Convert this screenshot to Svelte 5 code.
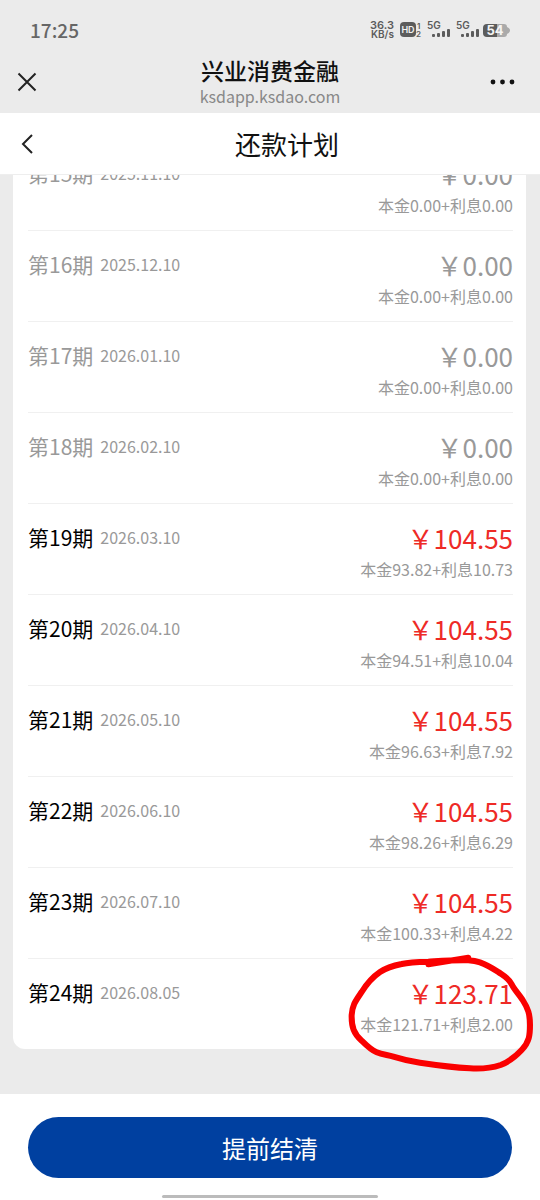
<script>
	const periods = [
		{ no: 15, date: '2025.11.10', total: '0.00', principal: '0.00', interest: '0.00' },
		{ no: 16, date: '2025.12.10', total: '0.00', principal: '0.00', interest: '0.00' },
		{ no: 17, date: '2026.01.10', total: '0.00', principal: '0.00', interest: '0.00' },
		{ no: 18, date: '2026.02.10', total: '0.00', principal: '0.00', interest: '0.00' },
		{ no: 19, date: '2026.03.10', total: '104.55', principal: '93.82', interest: '10.73' },
		{ no: 20, date: '2026.04.10', total: '104.55', principal: '94.51', interest: '10.04' },
		{ no: 21, date: '2026.05.10', total: '104.55', principal: '96.63', interest: '7.92' },
		{ no: 22, date: '2026.06.10', total: '104.55', principal: '98.26', interest: '6.29' },
		{ no: 23, date: '2026.07.10', total: '104.55', principal: '100.33', interest: '4.22' },
		{ no: 24, date: '2026.08.05', total: '123.71', principal: '121.71', interest: '2.00', marked: true }
	];

	// x offsets of the two SIM indicators
	const sims = [57, 86];
</script>

<div class="screen">
	<div class="status-bar">
		<span class="time">17:25</span>
		<svg class="status-icons" width="140" height="20" viewBox="0 0 140 20">
			<text x="0" y="9" font-size="11">36.3</text>
			<text x="1" y="18" font-size="10">KB/s</text>
			<rect x="30" y="2" width="16" height="15" rx="4" />
			<text class="light" x="38" y="13" font-size="9" text-anchor="middle">HD</text>
			<text x="47" y="9" font-size="8">1</text>
			<text x="46" y="17" font-size="8">2</text>
			{#each sims as x}
				<g transform="translate({x} 0)">
					<text x="0" y="9" font-size="10">5G</text>
					<rect x="5" y="14" width="3" height="3" rx="1" />
					<rect x="10" y="13" width="3" height="4" rx="1" />
					<rect x="15" y="11" width="3" height="6" rx="1" />
					<rect x="20" y="9" width="3" height="8" rx="1" />
				</g>
			{/each}
			<path class="pale" d="M117 4h17a3 3 0 0 1 3 3c2 1 3 2 3 3.500s-1 2.500-3 3.500a3 3 0 0 1-3 3h-17z" />
			<path d="M117 4h10v13h-10a4 4 0 0 1-4-4V8a4 4 0 0 1 4-4z" />
			<text class="light level" x="125" y="15" font-size="13" text-anchor="middle">54</text>
		</svg>
	</div>

	<div class="browser-bar">
		<button class="icon-btn close" aria-label="关闭">
			<svg width="20" height="20" viewBox="0 0 20 20">
				<path d="M1.500 1.500l17 17M18.500 1.500l-17 17" />
			</svg>
		</button>
		<div class="site">
			<strong>兴业消费金融</strong>
			<span>ksdapp.ksdao.com</span>
		</div>
		<button class="icon-btn" aria-label="更多">
			<svg class="dots" width="26" height="20" viewBox="0 0 26 20">
				<circle cx="3" cy="10" r="2.400" />
				<circle cx="12.500" cy="10" r="2.400" />
				<circle cx="22" cy="10" r="2.400" />
			</svg>
		</button>
	</div>

	<header>
		<button class="back" aria-label="返回">
			<svg width="14" height="20" viewBox="0 0 14 20">
				<path d="M12 1L3 10l9 9" />
			</svg>
		</button>
		<h1>还款计划</h1>
	</header>

	<main>
		<ul class="card">
			{#each periods as p}
				<li class:due={p.total !== '0.00'}>
					<div class="period">
						<span class="no">第{p.no}期</span>
						<span class="date">{p.date}</span>
					</div>
					<div class="amount">
						<span class="total">￥{p.total}</span>
						<span class="detail">本金{p.principal}+利息{p.interest}</span>
					</div>
					{#if p.marked}
						<svg class="mark" width="190" height="124" viewBox="48 36 570 372">
							<path d="M295 73L415 53M415 61C365 60 330 63 295 65C255 66 232 68 215 72C185 78 165 86 150 96C125 113 108 135 95 156C76 184 67 195 65 225C64 262 72 282 95 302C110 317 123 330 140 337C157 344 174 345 190 350C215 358 242 364 270 368C310 374 370 382 420 385C450 387 485 384 512 375C538 365 560 346 575 330C598 306 600 285 600 255C600 222 594 205 578 180C563 158 552 148 545 133C537 115 524 109 505 96C485 83 470 74 450 67C437 63 430 62 415 61" />
						</svg>
					{/if}
				</li>
			{/each}
		</ul>
	</main>

	<footer>
		<button class="settle">提前结清</button>
		<div class="home-indicator"></div>
	</footer>
</div>

<style>
	:global(body) {
		margin: 0;
		background: #ebebeb;
	}

	.screen {
		height: 100vh;
		display: flex;
		flex-direction: column;
		font-family: 'Noto Sans CJK SC', sans-serif;
		color: #111;
	}

	button {
		border: 0;
		padding: 0;
		background: none;
		font-family: inherit;
		cursor: pointer;
	}

	svg {
		display: block;
	}

	.status-bar {
		display: flex;
		justify-content: space-between;
		align-items: center;
		padding: 18px 30px 8px;
		flex-shrink: 0;
	}

	.time {
		font-size: 19px;
		line-height: 24px;
		font-weight: 500;
		color: #666;
	}

	.status-icons {
		overflow: visible;
		fill: #5c5c5c;
		font-weight: 600;
		font-family: Inter, sans-serif;
	}

	.status-icons .light {
		fill: #f4f4f4;
	}

	.status-icons .level {
		font-weight: 700;
	}

	.status-icons .pale {
		fill: #aaa;
	}

	.browser-bar {
		display: flex;
		justify-content: space-between;
		align-items: center;
		flex-shrink: 0;
		padding: 6px 24px 5px 17px;
	}

	.icon-btn {
		display: flex;
		width: 26px;
	}

	/* wider than its icon, so that the site name stays centred */
	.close {
		width: 33px;
	}

	.icon-btn svg,
	.back svg {
		fill: none;
		stroke: #222;
		stroke-width: 2;
	}

	.icon-btn .dots {
		fill: #111;
		stroke: none;
	}

	.site {
		display: flex;
		flex-direction: column;
		align-items: center;
	}

	.site strong {
		font-size: 23px;
		line-height: 28px;
		font-weight: 500;
	}

	.site span {
		font-size: 16px;
		line-height: 24px;
		color: #888;
	}

	header {
		display: flex;
		align-items: center;
		height: 61px;
		flex-shrink: 0;
		background: #fff;
		border-bottom: 1px solid #eee;
	}

	.back {
		display: flex;
		justify-content: flex-end;
		width: 34px;
	}

	h1 {
		flex: 1;
		margin: 0;
		text-align: center;
		font-size: 26px;
		line-height: 36px;
		font-weight: 400;
	}

	/* reversed column keeps the list scrolled to the last period */
	main {
		flex: 1;
		min-height: 0;
		display: flex;
		flex-direction: column-reverse;
		overflow-x: hidden;
		overflow-y: auto;
		scrollbar-width: none;
		padding: 0 14px 45px 13px;
	}

	.card {
		list-style: none;
		margin: 0;
		padding: 0 13px 0 15px;
		background: #fff;
		border-radius: 12px;
	}

	li {
		position: relative;
		display: flex;
		justify-content: space-between;
		box-sizing: border-box;
		height: 91px;
		padding-top: 17px;
		border-bottom: 1px solid #f0f0f0;
		color: #999;
	}

	li:last-child {
		height: 90px;
		border-bottom: 0;
	}

	.period {
		display: flex;
		align-items: center;
		gap: 7px;
		height: 32px;
	}

	.no {
		font-size: 21px;
	}

	.date {
		font-size: 16px;
	}

	.amount {
		display: flex;
		flex-direction: column;
		align-items: flex-end;
	}

	.total {
		font-size: 26px;
		line-height: 34px;
	}

	.detail {
		font-size: 16px;
		line-height: 28px;
	}

	.due .no {
		color: #000;
	}

	.due .total {
		color: #ee2a26;
	}

	.mark {
		position: absolute;
		top: -7px;
		right: -23px;
		fill: none;
		stroke: #fa0000;
		stroke-width: 18;
		stroke-linecap: round;
		stroke-linejoin: round;
	}

	footer {
		display: flex;
		flex-direction: column;
		align-items: center;
		flex-shrink: 0;
		padding: 23px 28px 2px;
		background: #fff;
	}

	.settle {
		width: 100%;
		height: 61px;
		border-radius: 31px;
		background: #0040a0;
		color: #fff;
		font-size: 24px;
	}

	.home-indicator {
		width: 216px;
		height: 3px;
		margin-top: 17px;
		border-radius: 2px;
		background: #bbb;
	}
</style>
